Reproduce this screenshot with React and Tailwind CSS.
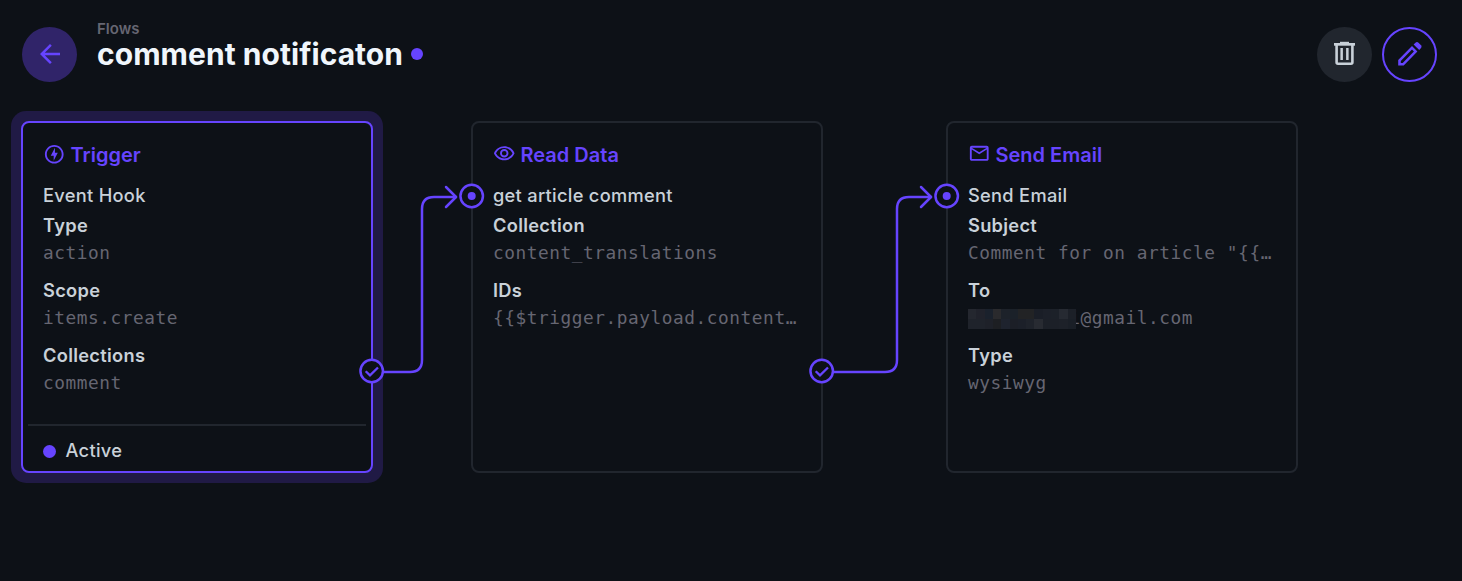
import { MdArrowBack, MdOutlineEmail, MdOutlineRemoveRedEye, MdOutlineOfflineBolt } from 'react-icons/md';

const SANS = "font-['Inter',sans-serif]";
const MONO = "font-['DejaVu_Sans_Mono',monospace]";
const BODY = 'text-[18.25px] tracking-[0.29px] leading-[27px] text-[#c9d1d9]';

const MOSAIC = [
  '#24272f', '#20222b', '#1a212c', '#2a2a2d', '#1d222a', '#1b2129', '#222325', '#222325', '#1a1e27', '#1c2029', '#1c2129', '#262a32', '#1c2028',
  '#1f232b', '#1f232b', '#1e2129', '#1d1f23', '#1e232e', '#1c1f27', '#1c2029', '#1f232b', '#282b32', '#1c2028', '#1c2028', '#1d2129', '#1a1f27',
];

function Mosaic() {
  return (
    <span className="absolute left-0 top-[5px] grid h-5 w-[108px] grid-cols-13 grid-rows-2">
      {MOSAIC.map((c, i) => (
        <span key={i} style={{ backgroundColor: c }} />
      ))}
    </span>
  );
}

function Field({ label, children }) {
  return (
    <div className="mb-[11px] h-[54px]">
      <div className={`${BODY} h-[27px] font-semibold`}>{label}</div>
      <div className={`${MONO} relative h-[27px] whitespace-pre text-[17.8px] leading-[27px] tracking-[0.55px] text-[#666672]`}>
        {children}
      </div>
    </div>
  );
}

function Card({ className, icon, title, name, children }) {
  return (
    <section className={`absolute top-[121px] flex h-[352px] w-[352px] flex-col rounded-[8px] border-2 bg-[#0d1117] ${className}`}>
      <header className="mt-[18px] flex h-7 items-center gap-[5px] pl-5 text-[#6644ff]">
        {icon}
        <h2 className="text-[20px] font-semibold leading-7">{title}</h2>
      </header>
      <div className="px-5 pt-[13px]">
        <div className={`${BODY} mb-[3px] h-[27px] font-medium`}>{name}</div>
        {children}
      </div>
    </section>
  );
}

function Wire({ className, end, turn }) {
  return (
    <svg className={`absolute ${className}`} width="120" height="200" viewBox="0 0 120 200" fill="none" stroke="#6644ff" strokeWidth="2.5" strokeLinecap="round">
      <path d={`M0 192H${turn - 12}Q${turn} 192 ${turn} 180V29Q${turn} 17 ${turn + 12} 17H${end}`} />
      <path d={`M${end - 10} 7L${end} 17L${end - 10} 27`} strokeLinejoin="round" />
    </svg>
  );
}

function InPort({ className }) {
  return (
    <svg className={`absolute ${className}`} width="26" height="26" viewBox="0 0 26 26">
      <circle cx="12.7" cy="13" r="11.25" fill="#0d1117" stroke="#6644ff" strokeWidth="2.5" />
      <circle cx="12.7" cy="13" r="4" fill="#6644ff" />
    </svg>
  );
}

function OutPort({ className }) {
  return (
    <svg className={`absolute ${className}`} width="26" height="26" viewBox="0 0 26 26" fill="none" stroke="#6644ff">
      <circle cx="12.7" cy="13" r="11.25" fill="#0d1117" strokeWidth="2.5" />
      <path d="M6.7 13.2L11 17.4L19 9.5" strokeWidth="2.3" />
    </svg>
  );
}

export default function App() {
  return (
    <div className={`${SANS} relative h-[581px] w-[1462px] overflow-hidden bg-[#0d1117]`}>
      <header className="flex items-start justify-between pl-[22px] pr-[25px] pt-[19px]">
        <div className="flex items-start gap-5">
          <button className="mt-2 flex size-[55px] items-center justify-center rounded-full bg-[#302469] pb-[2px] text-[#6644ff]">
            <MdArrowBack size={30} />
          </button>
          <div>
            <div className="h-[19px] text-[15px] font-semibold leading-5 text-[#666672]">Flows</div>
            <div className="flex h-8 items-center gap-2">
              <h1 className="text-[30px] font-bold leading-8 tracking-[0.05px] text-[#f0f6fc]">comment notificaton</h1>
              <span className="size-3 rounded-full bg-[#6644ff]" />
            </div>
          </div>
        </div>
        <div className="mt-2 flex gap-2.5">
          <button className="flex size-[55px] items-center justify-center rounded-full bg-[#21262e] text-[#c9d1d9]">
            <svg width="31" height="31" viewBox="0 0 31 31" fill="currentColor">
              <rect x="11" y="2.8" width="9" height="2" />
              <rect x="5" y="4" width="21" height="2.7" />
              <path d="M7.6 6V23.3Q7.6 24.7 9 24.7H22Q23.400 24.7 23.4 23.3V6" fill="none" stroke="currentColor" strokeWidth="2.6" />
              <rect x="11.4" y="9" width="2.5" height="12" />
              <rect x="17.1" y="9" width="2.5" height="12" />
            </svg>
          </button>
          <button className="flex size-[55px] items-center justify-center rounded-full border-2 border-[#6644ff] text-[#6644ff]">
            <svg width="30" height="30" viewBox="0 0 30 30" fill="currentColor">
              <path fillRule="evenodd" d="M3.2 19.9L17 6L22.4 11.4L8.7 25.4H3.2zM5.8 21V22.9H7.7L18.9 11.5L17 9.6z" />
              <path d="M18.6 4.4L20.5 2.7Q22 1.5 23.5 2.8L26 5.3Q27.2 6.8 26 8.1L24.2 9.9z" />
            </svg>
          </button>
        </div>
      </header>

      <div className="absolute left-[11px] top-[111px] size-[372px] rounded-[15px] bg-[#201a45]" />
      <Card
        className="left-[21px] border-[#6644ff]"
        icon={<MdOutlineOfflineBolt size={22.5} className="-mt-0.5" />}
        title="Trigger"
        name="Event Hook"
      >
        <Field label="Type">action</Field>
        <Field label="Scope">items.create</Field>
        <Field label="Collections">comment</Field>
        <div className="absolute inset-x-[5px] bottom-0 h-[47px] border-t-2 border-[#21262e] pl-[15px] pt-[11px]">
          <div className="flex h-[27px] items-center gap-[9.5px]">
            <span className="mt-[2px] size-[13px] rounded-full bg-[#6644ff]" />
            <span className={`${BODY} font-medium`}>Active</span>
          </div>
        </div>
      </Card>
      <Card
        className="left-[471px] border-[#21262e]"
        icon={<MdOutlineRemoveRedEye size={22.5} className="-mt-[3px]" />}
        title="Read Data"
        name="get article comment"
      >
        <Field label="Collection">content_translations</Field>
        <Field label="IDs">{'{{$trigger.payload.content…'}</Field>
      </Card>
      <Card
        className="left-[946px] border-[#21262e]"
        icon={<MdOutlineEmail size={22.5} className="-mt-[3px]" />}
        title="Send Email"
        name="Send Email"
      >
        <Field label="Subject">{'Comment for on article "{{…'}</Field>
        <Field label="To">
          <span className="pl-[101.25px]">i@gmail.com</span>
          <Mosaic />
        </Field>
        <Field label="Type">wysiwyg</Field>
      </Card>

      <Wire className="left-[384px] top-[180px]" turn={38} end={72} />
      <Wire className="left-[834px] top-[180px]" turn={63} end={97} />
      <OutPort className="left-[359px] top-[358px]" />
      <OutPort className="left-[809px] top-[358px]" />
      <InPort className="left-[459px] top-[183px]" />
      <InPort className="left-[934px] top-[183px]" />
    </div>
  );
}
